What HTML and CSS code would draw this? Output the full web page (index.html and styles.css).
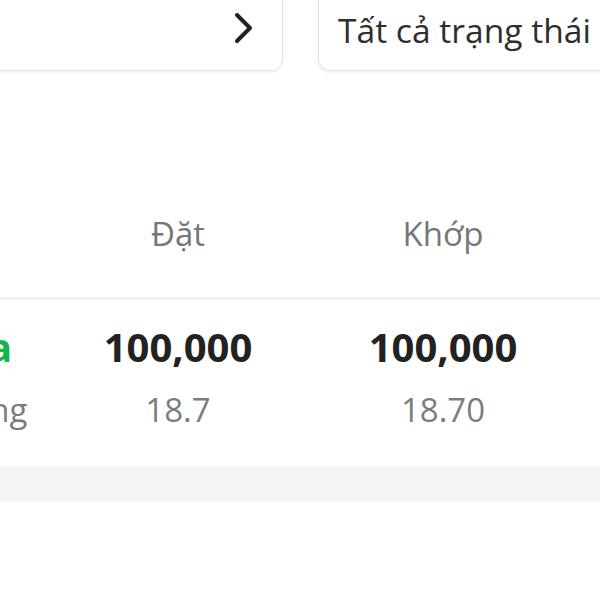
FILE: index.html
```html
<!DOCTYPE html>
<html lang="vi">
<head>
<meta charset="utf-8">
<link rel="stylesheet" href="styles.css">
</head>
<body>
<div class="page">
  <div class="filters">
    <div class="box box-date">
      <svg class="chev" width="20" height="32" viewBox="0 0 20 32"><path d="M3 3 L16 16 L3 29" fill="none" stroke="#222" stroke-width="4" stroke-linecap="round" stroke-linejoin="round"/></svg>
    </div>
    <div class="box box-status">
      <span class="status-text">Tất cả trạng thái</span>
    </div>
  </div>

  <div class="table">
    <div class="row head">
      <div class="cell"></div>
      <div class="cell">Đặt</div>
      <div class="cell">Khớp</div>
      <div class="cell"></div>
    </div>
    <div class="row body">
      <div class="cell">
        <div class="main buy">Mua</div>
        <div class="sub">Thường</div>
      </div>
      <div class="cell">
        <div class="main">100,000</div>
        <div class="sub">18.7</div>
      </div>
      <div class="cell">
        <div class="main">100,000</div>
        <div class="sub">18.70</div>
      </div>
      <div class="cell"></div>
    </div>
  </div>

  <div class="band"></div>
</div>
</body>
</html>
```
FILE: styles.css
```css
html, body {
  margin: 0;
  padding: 0;
  background: #ffffff;
}
body {
  font-family: "Open Sans", "Noto Sans", sans-serif;
  overflow: hidden;
  width: 600px;
  height: 600px;
}
.page {
  width: 600px;
  overflow: hidden;
}
.filters {
  display: flex;
  gap: 35px;
  margin-top: -20px;
  margin-left: -100px;
  height: 91px;
}
.box {
  box-sizing: border-box;
  height: 91px;
  border: 1.5px solid #e4e4e4;
  border-radius: 12px;
  background: #fff;
  box-shadow: 0 2px 3px rgba(0,0,0,0.06);
  display: flex;
  align-items: center;
  padding-top: 4px;
}
.box-date {
  flex: 0 0 383px;
  justify-content: flex-end;
  padding-right: 28px;
}
.box-status {
  flex: 0 0 340px;
  padding-left: 19px;
  padding-top: 8px;
}
.status-text {
  font-size: 33.6px;
  color: #2e2e2e;
  white-space: nowrap;
}
.table {
  margin-top: 96px;
  margin-left: -110px;
}
.row {
  display: grid;
  grid-template-columns: 156px 264px 266px 100px;
}
.head {
  height: 130px;
  align-items: center;
  border-bottom: 3px solid #f1f1f1;
  font-size: 33px;
  color: #777;
}
.head .cell {
  text-align: center;
  padding-top: 2px;
}
.body {
  padding-top: 22px;
}
.body .cell {
  display: flex;
  flex-direction: column;
  align-items: center;
  gap: 13px;
}
.main {
  font-size: 40px;
  font-weight: 700;
  color: #222;
  line-height: 50px;
}
.main.buy {
  color: #14b54c;
}
.sub {
  font-size: 33px;
  color: #7c7c7c;
  line-height: 50px;
}
.band {
  margin-top: 31px;
  height: 36px;
  background: #f4f4f4;
}
```
